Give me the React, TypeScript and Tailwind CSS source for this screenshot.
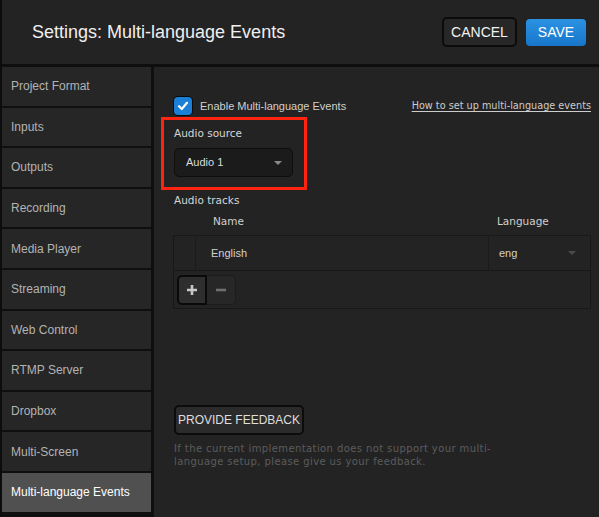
import React from "react";

const items = [
  "Project Format",
  "Inputs",
  "Outputs",
  "Recording",
  "Media Player",
  "Streaming",
  "Web Control",
  "RTMP Server",
  "Dropbox",
  "Multi-Screen",
  "Multi-language Events",
];

function Caret({ className }: { className: string }) {
  return (
    <svg width="8" height="4" viewBox="0 0 8 4" className={className}>
      <path d="M0 0 L8 0 L4 4 Z" fill="currentColor" />
    </svg>
  );
}

export default function App() {
  return (
    <div className="w-[599px] h-[517px] overflow-hidden bg-[#232323] border-l-2 border-[#0c0c0c] flex flex-col font-['Liberation_Sans',Arial,sans-serif]">
      <header className="h-[67px] shrink-0 border-b-[3px] border-[#0e0e0e] flex items-center pl-[30px] pr-[13px]">
        <h1 className="flex-1 text-[18px] text-[#efefef]">Settings: Multi-language Events</h1>
        <button className="h-[30px] w-[75px] rounded-[5px] border-2 border-[#0b0b0b] bg-[#272727] text-[14px] text-[#f2f2f2]">
          CANCEL
        </button>
        <button className="ml-[9px] h-[27px] w-[60px] rounded-[4px] bg-gradient-to-b from-[#2b92e2] to-[#1876ca] text-[14px] text-white">
          SAVE
        </button>
      </header>

      <div className="flex flex-1 min-h-0">
        <nav className="w-[152px] shrink-0 bg-[#0f0f0f] pr-[3px] flex flex-col gap-[2px]">
          {items.map((it, i) => {
            const sel = i === items.length - 1;
            return (
              <div
                key={it}
                className={
                  sel
                    ? "h-[38.6px] shrink-0 flex items-center pl-[9px] text-[12px] bg-[#505050] text-white"
                    : "h-[38.6px] shrink-0 flex items-center pl-[9px] text-[12px] bg-[#262626] text-[#b3b3b3]"
                }
              >
                {it}
              </div>
            );
          })}
        </nav>

        <main className="relative flex-1 pl-[20px] pt-[30px] pr-[8px]">
          <div className="flex items-center h-[18px]">
            <div className="w-[18px] h-[18px] rounded-[4px] bg-[#1b7fd6] ring-1 ring-[#0a0a0a] flex items-center justify-center">
              <svg width="12" height="12" viewBox="0 0 12 12">
                <path d="M2 6.2 L4.8 9 L10 2.8" stroke="white" strokeWidth="2.2" fill="none" strokeLinecap="round" strokeLinejoin="round" />
              </svg>
            </div>
            <span className="ml-[8px] text-[11px] text-[#cfcfcf]">Enable Multi-language Events</span>
            <span className="ml-auto text-[9.7px] text-[#cdcdcd] underline underline-offset-2 font-['DejaVu_Sans',sans-serif]">
              How to set up multi-language events
            </span>
          </div>

          <div className="mt-[12px] text-[10.5px] leading-[13px] text-[#d6d6d6] font-['DejaVu_Sans',sans-serif]">
            Audio source
          </div>
          <div className="mt-[8px] h-[29px] w-[119px] rounded-[5px] border border-[#0e0e0e] bg-[#1b1b1b] flex items-center pl-[11px] pr-[10px]">
            <span className="flex-1 text-[11px] text-[#dcdcdc]">Audio 1</span>
            <Caret className="text-[#8a8a8a]" />
          </div>

          <div className="mt-[17px] text-[10.5px] leading-[13px] text-[#d6d6d6] font-['DejaVu_Sans',sans-serif]">
            Audio tracks
          </div>
          <div className="mt-[8px] flex h-[13px] text-[10.5px] leading-[13px] text-[#cfcfcf] font-['DejaVu_Sans',sans-serif]">
            <span className="ml-[39px] w-[284px]">Name</span>
            <span>Language</span>
          </div>

          <div className="mt-[7px] ml-[-1px] w-[418px] border border-[#181818]">
            <div className="flex h-[35px] border-b border-[#181818]">
              <div className="w-[22px] border-r border-[#1b1b1b]" />
              <div className="w-[293px] border-r border-[#1b1b1b] flex items-center pl-[15px] text-[11px] text-[#d2d2d2]">
                English
              </div>
              <div className="flex-1 flex items-center pl-[10px] pr-[14px] text-[11px] text-[#d2d2d2]">
                <span className="flex-1">eng</span>
                <Caret className="text-[#4a4a4a]" />
              </div>
            </div>
            <div className="h-[37px] pt-[4px] pl-[3px] flex">
              <div className="h-[30px] w-[30px] rounded-l-[5px] border-2 border-[#0a0a0a] bg-[#2e2e2e] flex items-center justify-center">
                <svg width="12" height="12" viewBox="0 0 12 12">
                  <path d="M6 1 V11 M1 6 H11" stroke="#c8c8c8" strokeWidth="2.6" />
                </svg>
              </div>
              <div className="h-[30px] w-[29px] rounded-r-[5px] border border-l-0 border-[#1c1c1c] bg-[#272727] flex items-center justify-center">
                <svg width="12" height="12" viewBox="0 0 12 12">
                  <path d="M1 6 H11" stroke="#6e6e6e" strokeWidth="2.6" />
                </svg>
              </div>
            </div>
          </div>

          <button className="mt-[96px] h-[30px] px-[2px] rounded-[5px] border-2 border-[#0c0c0c] bg-[#2b2b2b] text-[12px] text-[#dedede]">
            PROVIDE FEEDBACK
          </button>
          <p className="mt-[7px] w-[340px] text-[10px] tracking-[0.4px] leading-[13px] text-[#5c5c5c] font-['DejaVu_Sans',sans-serif]">
            If the current implementation does not support your multi-
            <br />
            language setup, please give us your feedback.
          </p>

          <div className="absolute left-[7px] top-[50px] w-[146px] h-[73px] border-[3px] border-[#ff2410] pointer-events-none" />
        </main>
      </div>
    </div>
  );
}
